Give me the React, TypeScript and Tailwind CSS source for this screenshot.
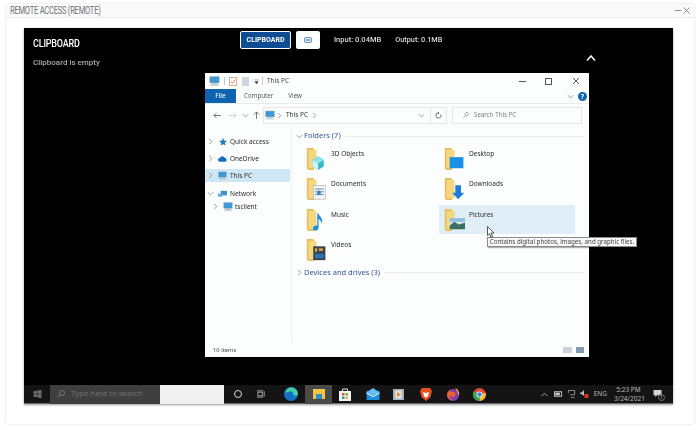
import type { FC, ReactNode } from "react";

const winFont = "font-['Noto_Sans','Liberation_Sans',sans-serif]";

const Chevron: FC<{ down?: boolean; className?: string }> = ({ down, className }) => (
  <svg viewBox="0 0 8 8" className={`w-[7px] h-[7px] ${className ?? ""}`} fill="none" stroke="#8a8f94" strokeWidth="1">
    {down ? <path d="M1 2.5 4 5.5 7 2.5" /> : <path d="M2.5 1 5.5 4 2.5 7" />}
  </svg>
);

const PcIcon: FC<{ className?: string }> = ({ className }) => (
  <svg viewBox="0 0 14 13" className={className}>
    <rect x="1" y="1" width="12" height="8" fill="#3d9ad6" stroke="#7f97a8" strokeWidth="0.6" />
    <rect x="3" y="10" width="8" height="1" fill="#7f97a8" />
    <rect x="1" y="11.4" width="12" height="1.2" fill="#b7c3cc" />
  </svg>
);

const FolderBase: FC<{ children?: ReactNode }> = ({ children }) => (
  <svg viewBox="0 0 26 26" preserveAspectRatio="none" className="w-[21px] h-[24px] shrink-0">
    <path d="M1 1h8l1 2v22H3l-2-2z" fill="#e3bd5e" />
    <path d="M3 3h10v20H3z" fill="#f6d77f" />
    {children}
  </svg>
);

const folderArt: Record<string, ReactNode> = {
  "3D Objects": (
    <>
      <path d="M8 14l7-4 7 4v7l-7 4-7-4z" fill="#35b8c9" />
      <path d="M8 14l7 4 7-4-7-4z" fill="#8fe3ea" />
      <path d="M8 14l7 4v7l-7-4z" fill="#d6f3f5" />
    </>
  ),
  Desktop: <rect x="7" y="11" width="17" height="12" fill="#1c8fe6" />,
  Documents: (
    <>
      <rect x="9" y="9" width="15" height="15" fill="#f2f5f7" stroke="#9aa7b0" strokeWidth="0.6" />
      <path d="M11 13h11M11 16h11M11 19h11" stroke="#5b7f9c" strokeWidth="1" />
      <circle cx="16" cy="17" r="2.4" fill="#3d82b8" />
    </>
  ),
  Downloads: <path d="M14 9h7v8h4l-7.500 7L10 17h4z" fill="#1a7fd4" />,
  Music: (
    <path d="M14 6h1.6c.5 3 4.4 4 4.4 8 0 1-.3 2-1 3 .2-3-2-4.400-3.400-5v9c0 2-2 3.500-4 3.500s-3-1-3-2.500 2-3 4-3c.5 0 1 .1 1.400.3z" fill="#1b8ee0" />
  ),
  Pictures: (
    <>
      <rect x="7" y="11" width="19" height="12" fill="#d9e8ee" />
      <path d="M7 19l6-4 5 3 8-2v7H7z" fill="#3f6f5e" />
      <rect x="7" y="11" width="19" height="4" fill="#8cc0de" />
    </>
  ),
  Videos: (
    <>
      <rect x="9" y="9" width="15" height="15" fill="#37424c" />
      <path d="M11 11h3v4h-3zM16 11h5v3h-5z" fill="#c8a34a" />
      <path d="M11 17h11v5H11z" fill="#2d73b3" />
    </>
  ),
};

const FolderItem: FC<{ name: string; active?: boolean }> = ({ name, active }) => (
  <div className={`h-[29.5px] flex gap-[4px] pl-[5px] pt-[3px] ${active ? "bg-[#e0eef7]" : ""}`}>
    <FolderBase>{folderArt[name]}</FolderBase>
    <span className="text-[6.5px] leading-[12px] pt-[1px] text-[#2c2c2c]">{name}</span>
  </div>
);

const NavRow: FC<{ label: string; icon: ReactNode; down?: boolean; active?: boolean; indent?: boolean; className?: string }> = ({
  label,
  icon,
  down,
  active,
  indent,
  className,
}) => (
  <div className={`h-[13px] w-[85px] flex items-center gap-[3px] ${indent ? "pl-[7px]" : "pl-[2px]"} ${active ? "bg-[#cfe6f5]" : ""} ${className ?? ""}`}>
    <Chevron down={down} />
    <span className="w-[11px] flex justify-center">{icon}</span>
    <span className="text-[6.5px] text-[#2c2c2c] whitespace-nowrap -ml-[1px]">{label}</span>
  </div>
);

const ExplorerWindow: FC = () => (
  <div className={`absolute left-[181px] top-[45px] w-[384px] h-[284px] bg-[#fcfefd] flex flex-col ${winFont}`}>
    <div className="h-[16px] flex items-center pl-[4px] shrink-0">
      <PcIcon className="w-[11px] h-[10px]" />
      <span className="w-px h-[8px] bg-[#c8c8c8] mx-[4px]" />
      <svg viewBox="0 0 9 10" className="w-[8px] h-[9px]">
        <rect x="0.5" y="0.500" width="8" height="9" fill="#fff" stroke="#d2a87c" />
        <path d="M2 5l2 2 3-4" stroke="#d8614a" fill="none" />
      </svg>
      <span className="w-[7px] h-[9px] bg-[#ccd6e0] ml-[5px]" />
      <svg viewBox="0 0 6 6" className="w-[5px] h-[5px] ml-[5px]">
        <path d="M0 1h6M1 3h4l-2 3z" fill="#333" stroke="#333" strokeWidth="0.4" />
      </svg>
      <span className="w-px h-[8px] bg-[#c8c8c8] ml-[3px] mr-[4px]" />
      <span className="text-[6.5px] text-[#444]">This PC</span>
      <div className="ml-auto flex items-center text-[#444]">
        <span className="w-[7px] h-px bg-[#555]" />
        <span className="w-[7px] h-[7px] border border-[#555] ml-[19px]" />
        <svg viewBox="0 0 8 8" className="w-[8px] h-[8px] ml-[20px] mr-[9px]" stroke="#444" strokeWidth="0.9">
          <path d="M1 1l6 6M7 1 1 7" />
        </svg>
      </div>
    </div>
    <div className="h-[14px] flex items-center shrink-0">
      <span className="w-[31px] h-[14px] bg-[#0f64b0] text-white text-[6.5px] flex items-center justify-center">File</span>
      <span className="text-[6.2px] text-[#555] ml-[8px]">Computer</span>
      <span className="text-[6.2px] text-[#555] ml-[15px]">View</span>
      <Chevron down className="ml-auto" />
      <span className="w-[9px] h-[9px] rounded-full bg-[#0f64b0] text-white text-[7px] font-bold leading-[9px] text-center ml-[4px] mr-[2px]">?</span>
    </div>
    <div className="h-[23px] flex items-center border-t border-[#e8eced] shrink-0">
      <svg viewBox="0 0 9 8" className="w-[8px] h-[7px] ml-[8px]" fill="none" stroke="#555" strokeWidth="0.9">
        <path d="M9 4H1M4 1 1 4l3 3" />
      </svg>
      <svg viewBox="0 0 9 8" className="w-[8px] h-[7px] ml-[8px]" fill="none" stroke="#c8c8c8" strokeWidth="0.9">
        <path d="M0 4h8M5 1l3 3-3 3" />
      </svg>
      <Chevron down className="ml-[5px]" />
      <svg viewBox="0 0 8 9" className="w-[7px] h-[8px] ml-[4px]" fill="none" stroke="#555" strokeWidth="0.9">
        <path d="M4 9V1M1 4l3-3 3 3" />
      </svg>
      <div className="w-[184px] h-[17px] border border-[#e3e7e8] ml-[3px] flex items-center pl-[1px]">
        <PcIcon className="w-[10px] h-[10px]" />
        <Chevron className="ml-[1px]" />
        <span className="text-[6.5px] text-[#333] ml-[3px]">This PC</span>
        <Chevron className="ml-[3px]" />
        <Chevron down className="ml-auto mr-[5px]" />
        <span className="w-[16px] h-[15px] border-l border-[#e3e7e8] flex items-center justify-center">
          <svg viewBox="0 0 8 8" className="w-[7px] h-[7px]" fill="none" stroke="#555" strokeWidth="0.9">
            <path d="M6.800 3A3 3 0 1 1 4 1M4 0v2.500" />
          </svg>
        </span>
      </div>
      <div className="w-[130px] h-[17px] border border-[#e3e7e8] ml-[5px] flex items-center pl-[10px]">
        <svg viewBox="0 0 8 8" className="w-[6px] h-[6px]" fill="none" stroke="#8a8f94">
          <circle cx="5" cy="3" r="2.300" />
          <path d="M3 5 .5 7.500" />
        </svg>
        <span className="text-[6.2px] text-[#7b7f83] ml-[5px]">Search This PC</span>
      </div>
    </div>
    <div className="flex-1 flex min-h-0">
      <div className="w-[87px] border-r border-[#edf1f1] pt-[9px] shrink-0">
        <NavRow
          label="Quick access"
          icon={
            <svg viewBox="0 0 10 10" className="w-[8px] h-[8px]">
              <path d="M5 0l1.500 3.200L10 3.700 7.400 6l.7 3.500L5 7.800 1.900 9.500 2.600 6 0 3.700l3.500-.5z" fill="#2d7cc0" />
            </svg>
          }
        />
        <NavRow
          label="OneDrive"
          className="mt-[4px]"
          icon={
            <svg viewBox="0 0 11 7" className="w-[9px] h-[6px]">
              <path d="M2.500 7a2.300 2.300 0 0 1-.3-4.600 3.200 3.200 0 0 1 6-.3 2.500 2.500 0 0 1 .5 4.900z" fill="#0f6fc0" />
            </svg>
          }
        />
        <NavRow label="This PC" active className="mt-[4px]" icon={<PcIcon className="w-[9px] h-[9px]" />} />
        <NavRow
          label="Network"
          down
          className="mt-[5px]"
          icon={
            <svg viewBox="0 0 10 9" className="w-[9px] h-[8px]">
              <rect x="3" y="1" width="7" height="5" fill="#3d8fc9" />
              <rect x="0" y="4" width="5" height="3.500" fill="#5aa8dc" />
            </svg>
          }
        />
        <NavRow label="tsclient" indent icon={<PcIcon className="w-[10px] h-[9px]" />} />
      </div>
      <div className="flex-1 pl-[4px] pt-[5px] pr-[5px] min-w-0">
        <div className="flex items-center h-[10px]">
          <Chevron down />
          <span className="text-[7.5px] text-[#3a5590] ml-[1px] whitespace-nowrap">Folders (7)</span>
          <span className="flex-1 h-px bg-[#e9edee] ml-[4px]" />
        </div>
        <div className="grid grid-cols-[136px_136px] gap-x-[2px] pl-[5px] mt-[2.5px] w-[290px]">
          {["3D Objects", "Desktop", "Documents", "Downloads", "Music", "Pictures", "Videos"].map((name) => (
            <div key={name} className="h-[30.5px]">
              <FolderItem name={name} active={name === "Pictures"} />
            </div>
          ))}
        </div>
        <div className="flex items-center h-[10px] mt-[2px]">
          <Chevron />
          <span className="text-[7.5px] text-[#3a5590] ml-[1px] whitespace-nowrap">Devices and drives (3)</span>
          <span className="flex-1 h-px bg-[#e9edee] ml-[4px]" />
        </div>
      </div>
    </div>
    <div className="h-[14px] shrink-0 flex items-center pl-[8px] pr-[5px]">
      <span className="text-[5.8px] text-[#444] pt-[1px]">10 items</span>
      <span className="ml-auto w-[9px] h-[6px] bg-[#ccd3d8] mr-[4px]" />
      <span className="w-[8px] h-[6px] bg-[#7f9cb4] " />
    </div>
  </div>
);

const Taskbar: FC = () => (
  <div className={`h-[19px] bg-[#141414] border-b border-[#6b6b6b] flex items-center shrink-0 ${winFont}`}>
    <div className="w-[26px] flex justify-center">
      <svg viewBox="0 0 9 9" className="w-[9px] h-[8px]" fill="#6f6f6f">
        <path d="M0 1.300 3.800.8v3.400H0zM4.400.7 9 0v4.200H4.400zM0 4.800h3.800v3.400L0 7.700zM4.400 4.800H9V9l-4.600-.7z" />
      </svg>
    </div>
    <div className="w-[110px] h-[19px] bg-[#3f3f3f] flex items-center pl-[7px]">
      <svg viewBox="0 0 8 8" className="w-[8px] h-[8px]" fill="none" stroke="#767676">
        <circle cx="5" cy="3" r="2.500" />
        <path d="M3 5 .5 7.500" />
      </svg>
      <span className="text-[7.8px] text-[#6f6f6f] ml-[6px] whitespace-nowrap">Type here to search</span>
    </div>
    <div className="w-[64px] h-[19px] bg-[#f0f0f0]" />
    <span className="w-[8px] h-[8px] rounded-full border-[1.5px] border-[#d8d8d8] ml-[10px]" />
    <svg viewBox="0 0 10 8" className="w-[9px] h-[8px] ml-[15px]" fill="none" stroke="#aaa">
      <rect x="1" y="2" width="5" height="4" />
      <path d="M8 1v6M0 .5h7M0 7.500h7" />
    </svg>
    <svg viewBox="0 0 14 14" className="w-[14px] h-[14px] ml-[18px]">
      <circle cx="7" cy="7" r="7" fill="#1670c4" />
      <path d="M1 6c1-4 4-6 7-5.500 3 .5 6 3 6 6.500 0 2-3 2-5 1 1-2-1-4-3-3.500-2 .3-4 1-5 1.500z" fill="#3fd0a8" />
    </svg>
    <div className="w-[27px] h-[19px] bg-[#4a4a4a] ml-[7px] flex items-center justify-center">
      <svg viewBox="0 0 12 10" className="w-[12px] h-[10px]">
        <rect width="12" height="10" fill="#f3c63f" />
        <rect x="3" y="5" width="6" height="5" fill="#2c8fd6" />
      </svg>
    </div>
    <svg viewBox="0 0 12 13" className="w-[12px] h-[13px] ml-[7px]">
      <path d="M3.500 3V1h5v2" fill="none" stroke="#ddd" />
      <rect y="3" width="12" height="10" fill="#f3f3f3" />
      <rect x="3" y="5" width="2.500" height="2.500" fill="#e0533d" />
      <rect x="6.500" y="5" width="2.500" height="2.500" fill="#6db33f" />
      <rect x="3" y="8.500" width="2.500" height="2.500" fill="#2f8fdc" />
      <rect x="6.500" y="8.500" width="2.500" height="2.500" fill="#f2b632" />
    </svg>
    <svg viewBox="0 0 14 13" className="w-[14px] h-[12px] ml-[15px]">
      <rect y="3" width="14" height="10" fill="#1b8ee0" />
      <path d="M0 5 7 0l7 5-7 3.500z" fill="#63bcf2" />
      <path d="M0 5l7 4 7-4v1L7 10 0 6z" fill="#fff" />
    </svg>
    <svg viewBox="0 0 12 12" className="w-[11px] h-[11px] ml-[13px]">
      <rect width="12" height="12" fill="#9fb3bf" />
      <rect x="2.500" y="1.500" width="7" height="9" fill="#e8e0d0" />
      <path d="M4.500 3.500 8.500 6l-4 2.500z" fill="#d97a30" />
    </svg>
    <svg viewBox="0 0 12 14" className="w-[12px] h-[14px] ml-[16px]">
      <path d="M2 1h8l2 3-1.500 6L6 14l-4.500-4L0 4z" fill="#e8501f" />
      <path d="M3 5l3 1 3-1-1 4-2 2-2-2z" fill="#fff" />
    </svg>
    <svg viewBox="0 0 14 14" className="w-[14px] h-[14px] ml-[14px]">
      <circle cx="7" cy="8" r="6" fill="#7a3fb0" />
      <path d="M1 8c0-3 2-4 3-5 0 1 1 2 3 2 3 0 3 3 2 4-1 2-4 1-5-1-1 2 1 5 4 5 1.500 0-7 1-7-5z" fill="#f0622d" />
      <path d="M9 1c3 1 5 4 4 8-1-3-2-5-4-8z" fill="#f7b52b" />
    </svg>
    <svg viewBox="0 0 14 14" className="w-[13px] h-[13px] ml-[13px]">
      <circle cx="7" cy="7" r="7" fill="#e0493a" />
      <path d="M7 7 13.500 5A7 7 0 0 1 7 14z" fill="#f5c02e" />
      <path d="M7 7 7 14A7 7 0 0 1 .8 3.500z" fill="#3ba54a" />
      <circle cx="7" cy="7" r="3.200" fill="#fff" />
      <circle cx="7" cy="7" r="2.400" fill="#3d84d8" />
    </svg>
    <div className="ml-auto flex items-center text-[#b9b9b9]">
      <svg viewBox="0 0 8 5" className="w-[7px] h-[5px]" fill="none" stroke="#bbb">
        <path d="M.5 4.500 4 1l3.500 3.500" />
      </svg>
      <svg viewBox="0 0 10 6" className="w-[9px] h-[6px] ml-[6px]">
        <rect x="0.500" y="0.500" width="8" height="5" fill="none" stroke="#ccc" />
        <rect x="1.500" y="1.500" width="5" height="3" fill="#ccc" />
      </svg>
      <svg viewBox="0 0 9 9" className="w-[9px] h-[8px] ml-[4px]" fill="none" stroke="#bbb" strokeWidth="0.8">
        <path d="M1 .5h7v5H3M1 .5v3M4 8.500h4" />
      </svg>
      <svg viewBox="0 0 9 8" className="w-[9px] h-[8px] ml-[4px]" fill="none">
        <path d="M0 2.500h1.500L4 0v6L1.500 4H0z" fill="#bbb" />
        <rect x="4.500" y="4" width="4" height="4" fill="#d8322a" />
      </svg>
      <span className="text-[6.5px] ml-[5px]">ENG</span>
      <div className="w-[29px] ml-[7px] text-[6.5px] leading-[9.500px] text-center whitespace-nowrap">
        <div>5:23 PM</div>
        <div>3/24/2021</div>
      </div>
      <div className="relative ml-[10px] mr-[11px]">
        <svg viewBox="0 0 9 9" className="w-[9px] h-[8px]">
          <path d="M0 0h9v6H4L2 8V6H0z" fill="#d5d5d5" />
        </svg>
        <span className="absolute -right-[3px] top-[4px] w-[7px] h-[7px] rounded-full border border-[#777] bg-[#141414] text-[5px] leading-[5px] text-center">1</span>
      </div>
    </div>
  </div>
);

export default function App() {
  return (
    <div className="w-[700px] h-[430px] bg-white p-[4px_6px_6px_6px] font-['Roboto','Liberation_Sans',sans-serif] overflow-hidden">
      <div className="h-full rounded-[2px] shadow-[0_0_3px_rgba(0,0,0,0.14)] flex flex-col">
        <div className="h-[14px] bg-[#fafafa] border-b border-[#ececec] flex items-center pl-[4px] pr-[4px] shrink-0">
          <span className="text-[10px] tracking-[-0.35px] text-[#6f7276] font-['Roboto',sans-serif] origin-left scale-x-[0.76] whitespace-nowrap">
            REMOTE ACCESS (REMOTE)
          </span>
          <span className="ml-auto w-[6px] h-px bg-[#8a8a8a]" />
          <svg viewBox="0 0 7 7" className="w-[7px] h-[7px] ml-[2px]" fill="none" stroke="#777" strokeWidth="0.8">
            <path d="M.5.5l6 6M6.500.5l-6 6" />
          </svg>
        </div>
        <div className="relative mx-[18px] mt-[10px] h-[376px] w-[649px] bg-black shadow-[0_1px_2px_rgba(0,0,0,0.4)] flex flex-col blur-[0.35px]">
          <div className="flex-1 flex min-h-0 relative">
            <div className="pl-[9px] pt-[10px] w-[216px] shrink-0">
              <div className="text-[10px] leading-[11px] text-white tracking-[-0.2px] font-medium scale-x-[0.9] origin-left">CLIPBOARD</div>
              <div className="text-[8px] leading-[10px] text-[#a8a8a8] mt-[9px] font-medium">Clipboard is empty</div>
            </div>
            <div className="flex items-start pt-[3px]">
              <span className="w-[51px] h-[18px] bg-[#0f4c94] border border-white rounded-[2px] text-white text-[7px] font-bold flex items-center justify-center">CLIPBOARD</span>
              <span className="w-[24px] h-[18px] bg-white rounded-[2px] ml-[5px] flex items-center justify-center">
                <svg viewBox="0 0 9 7" className="w-[8px] h-[6px]">
                  <rect x="0.500" y="0.500" width="8" height="6" rx="1" fill="#dce8f5" stroke="#2b67ad" strokeWidth="0.8" />
                  <path d="M2 3.500h5" stroke="#2b67ad" />
                </svg>
              </span>
              <span className="text-[7.5px] leading-[10px] text-[#d8d8d8] font-medium ml-[14px] mt-[4px] whitespace-nowrap">Input: 0.04MB</span>
              <span className="text-[7.3px] leading-[10px] text-[#d8d8d8] font-medium ml-[14px] mt-[4px] whitespace-nowrap">Output: 0.1MB</span>
            </div>
            <svg viewBox="0 0 10 6" className="absolute left-[562px] top-[27px] w-[10px] h-[6px]" fill="none" stroke="#fff" strokeWidth="1.5">
              <path d="M1 5.500 5 1l4 4.500" />
            </svg>
            <ExplorerWindow />
            <div className={`absolute left-[463px] top-[209px] h-[10px] w-[150px] bg-[#f8f8f8] border border-[#8a8a8a] shadow-[1px_1px_1px_rgba(0,0,0,0.3)] flex items-center justify-center text-[6.2px] text-[#444] whitespace-nowrap ${winFont}`}>
              Contains digital photos, images, and graphic files.
            </div>
            <svg viewBox="0 0 8 12" className="absolute left-[463px] top-[198px] w-[8px] h-[12px]">
              <path d="M.5.5v9l2-1.800 1.500 3.500 1.500-.7L4 7h3z" fill="#fff" stroke="#111" strokeWidth="0.7" />
            </svg>
          </div>
          <Taskbar />
        </div>
      </div>
    </div>
  );
}
